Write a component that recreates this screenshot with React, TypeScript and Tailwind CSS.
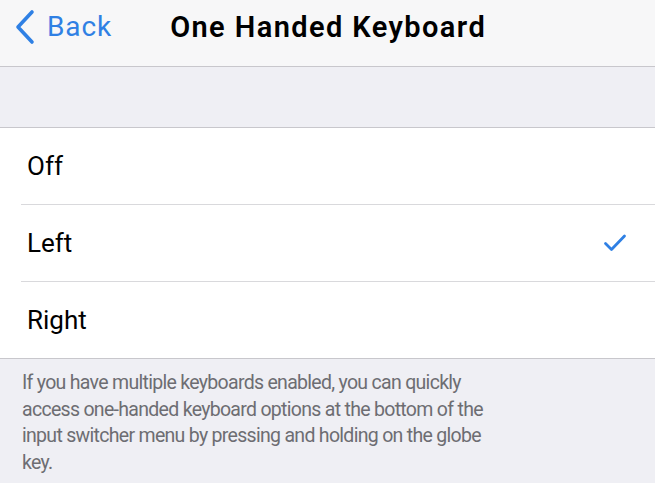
import { useState } from "react";

const OPTIONS = ["Off", "Left", "Right"] as const;
type Option = (typeof OPTIONS)[number];

function BackChevron() {
  return (
    <svg width="24" height="36" viewBox="0 0 24 36" fill="none">
      <path
        d="M19 3 L5 18 L19 33"
        stroke="#2f80e4"
        strokeWidth="3.6"
        strokeLinecap="round"
        strokeLinejoin="round"
      />
    </svg>
  );
}

function Check() {
  return (
    <svg width="24" height="20" viewBox="0 0 24 20" fill="none">
      <path
        d="M2.5 10.5 L8.5 16.5 L21.5 3"
        stroke="#2f80e4"
        strokeWidth="2.8"
        strokeLinecap="round"
        strokeLinejoin="round"
      />
    </svg>
  );
}

export default function App() {
  const [selected, setSelected] = useState<Option>("Left");

  return (
    <div
      className="flex h-[483px] w-[655px] flex-col overflow-hidden bg-[#efeff4]"
      style={{ fontFamily: "Roboto, 'Liberation Sans', sans-serif" }}
    >
      <header className="flex h-[67px] shrink-0 items-center border-b border-[#c8c7cc] bg-[#f7f7f8] pb-[12px]">
        <button className="ml-[13px] flex items-center gap-[10px] text-[28px] tracking-[0.9px] text-[#2f80e4]">
          <BackChevron />
          <span className="leading-none">Back</span>
        </button>
        <h1 className="ml-[58px] text-[29px] font-semibold leading-none tracking-[1.4px] text-black">
          One Handed Keyboard
        </h1>
      </header>

      <div className="h-[60px] shrink-0" />

      <ul className="shrink-0 border-y border-[#c8c7cc] bg-white">
        {OPTIONS.map((option, i) => (
          <li key={option}>
            <button
              onClick={() => setSelected(option)}
              className="flex h-[76px] w-full items-center pl-[27px] pr-[28px] text-left"
            >
              <span className="flex-1 text-[26px] text-black">{option}</span>
              {selected === option && <Check />}
            </button>
            {i < OPTIONS.length - 1 && <div className="ml-[21px] h-px bg-[#d9d9dc]" />}
          </li>
        ))}
      </ul>

      <p className="w-[508px] pl-[22px] pt-[11px] text-[19.5px] leading-[26.5px] tracking-[-0.7px] text-[#6d6d72]">
        If you have multiple keyboards enabled, you can quickly access one-handed keyboard
        options at the bottom of the input switcher menu by pressing and holding on the globe
        key.
      </p>
    </div>
  );
}
